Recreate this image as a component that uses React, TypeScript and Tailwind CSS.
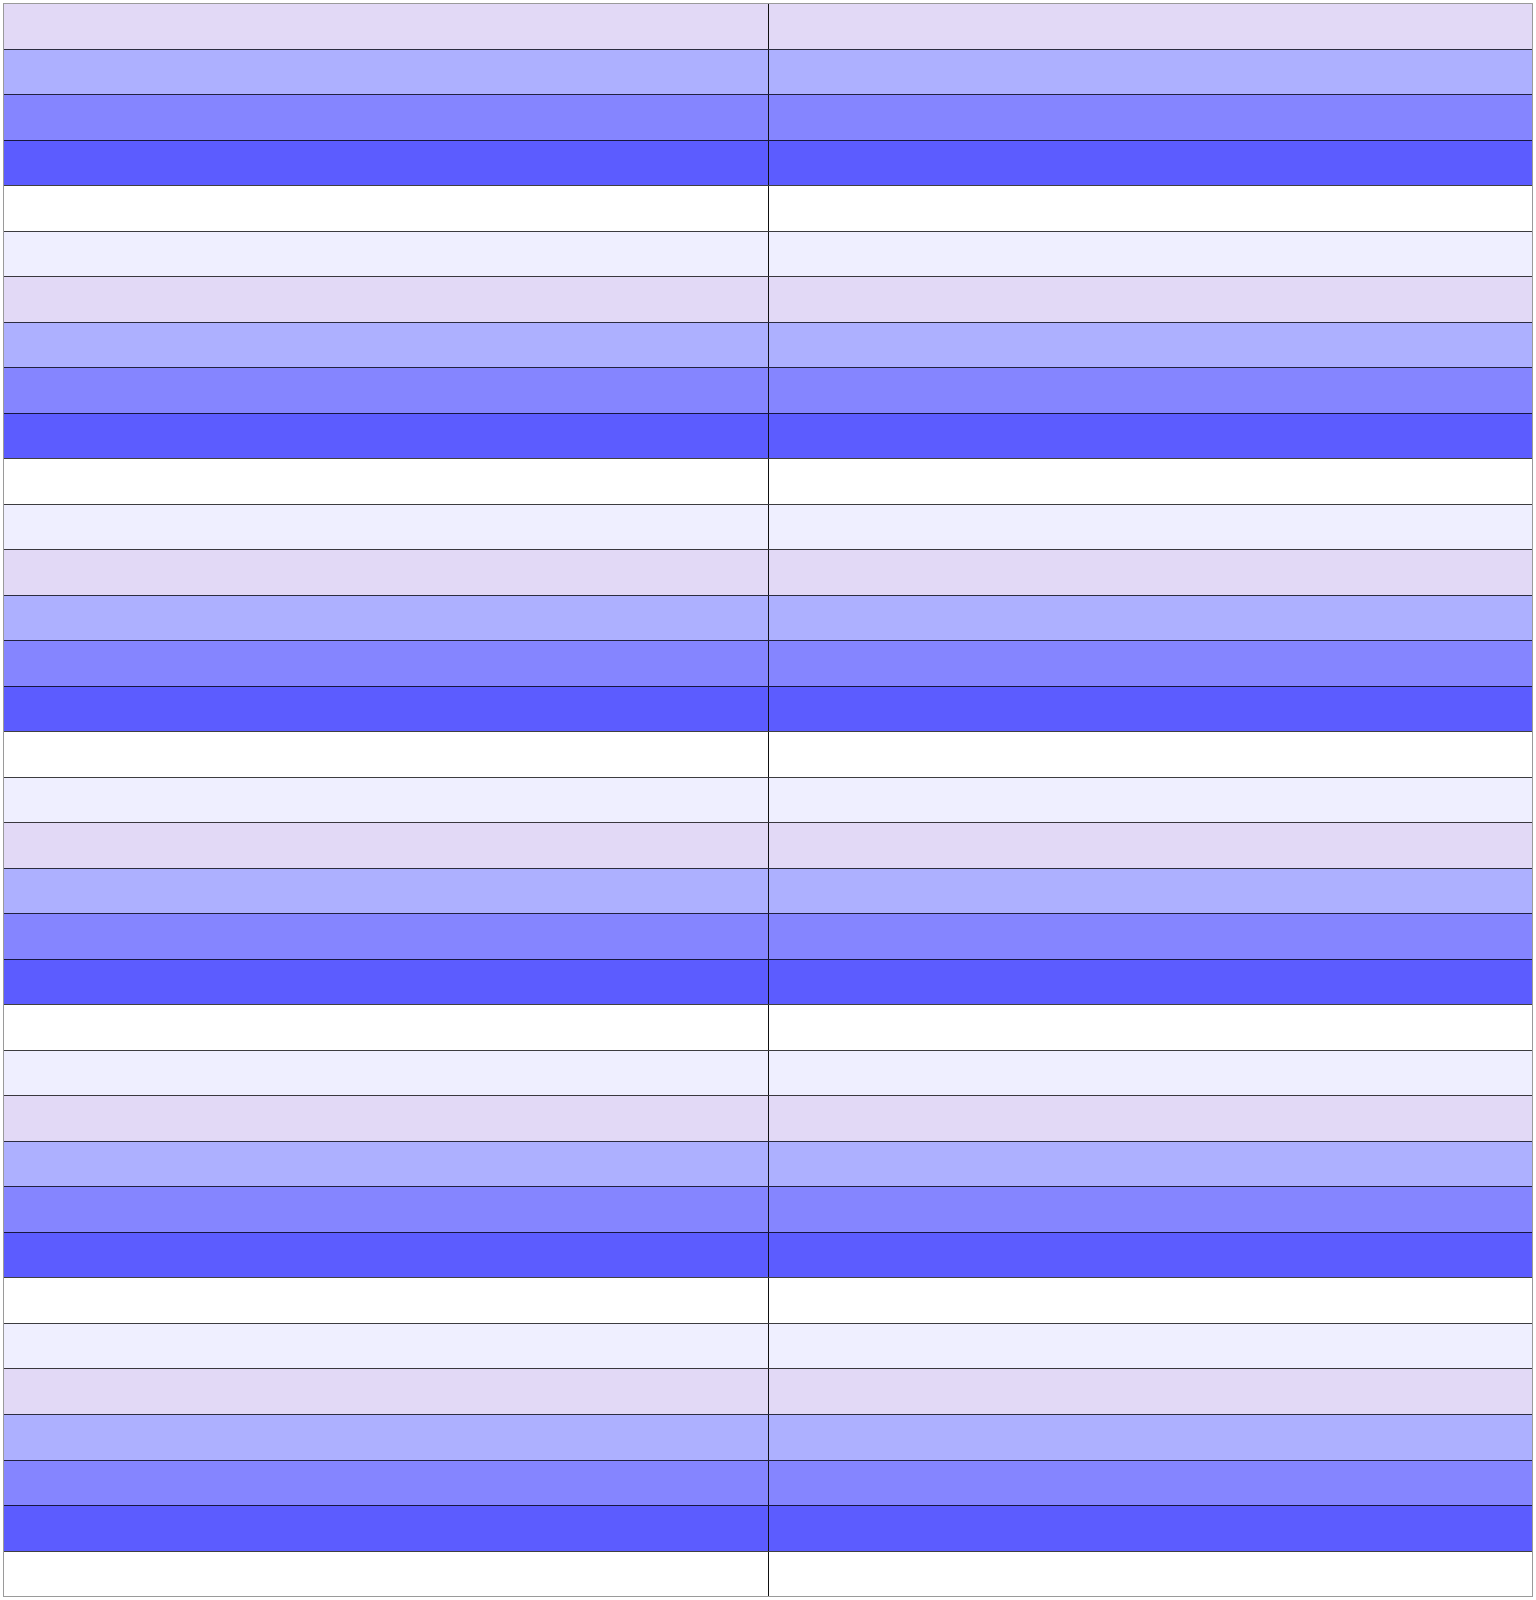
import React from 'react';

const ROW_COLORS = [
  'bg-[#e2d9f6]',
  'bg-[#adb0ff]',
  'bg-[#8585ff]',
  'bg-[#5c5cff]',
  'bg-white',
  'bg-[#efefff]',
];

const ROW_COUNT = 35;

export default function App() {
  const rows = Array.from({ length: ROW_COUNT }, (_, i) => i);

  return (
    <div className="w-[1536px] h-[1600px] bg-white p-[3px]">
      <div className="h-[1594px] w-[1530px] border border-[#9a9a9a] flex flex-col">
        {rows.map((i) => (
          <div
            key={i}
            className={`flex-1 flex ${ROW_COLORS[i % 6]} ${
              i > 0 ? 'border-t border-black/75' : ''
            }`}
          >
            <div className="w-[765px] border-r border-[#111]" />
            <div className="flex-1" />
          </div>
        ))}
      </div>
    </div>
  );
}
